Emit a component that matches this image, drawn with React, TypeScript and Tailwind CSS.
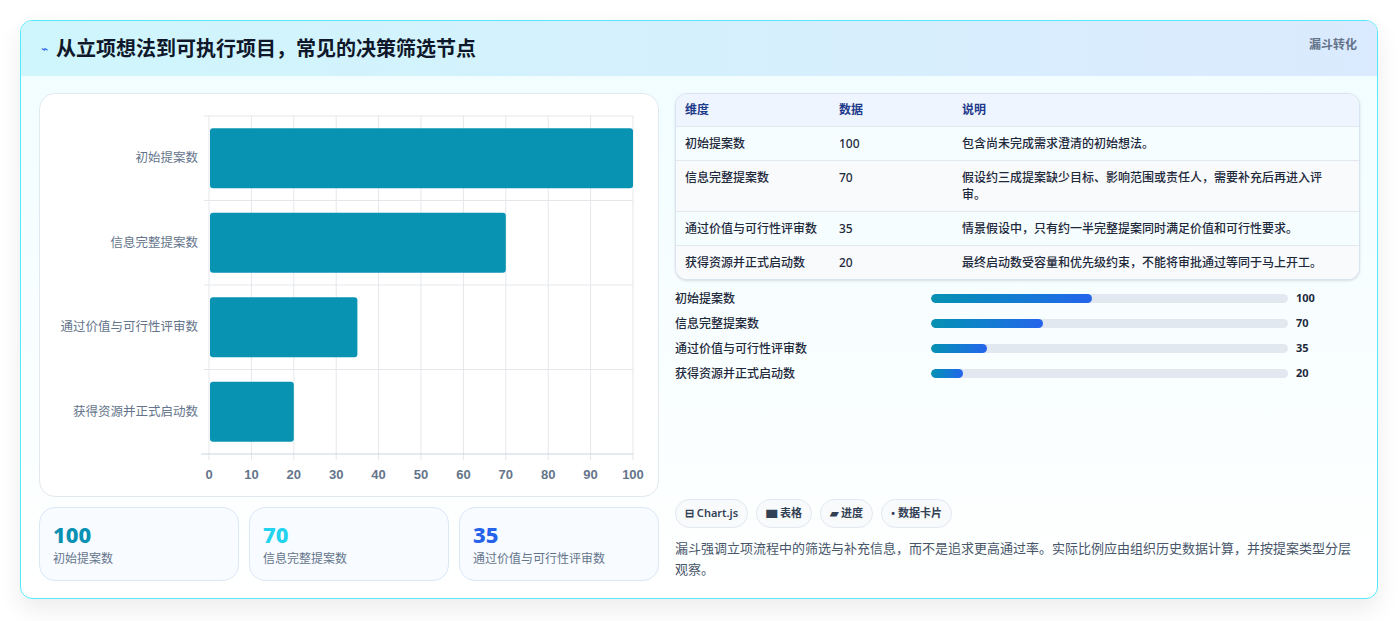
import React from "react";

const rows = [
  { n: "初始提案数", v: 100, d: "包含尚未完成需求澄清的初始想法。" },
  { n: "信息完整提案数", v: 70, d: "假设约三成提案缺少目标、影响范围或责任人，需要补充后再进入评审。" },
  { n: "通过价值与可行性评审数", v: 35, d: "情景假设中，只有约一半完整提案同时满足价值和可行性要求。" },
  { n: "获得资源并正式启动数", v: 20, d: "最终启动数受容量和优先级约束，不能将审批通过等同于马上开工。" },
];

function Chart() {
  const L = 169, R = 593, T = 22, B = 360;
  const W = R - L;
  const rowH = (B - T) / 4;
  return (
    <svg width="619" height="403" className="block">
      {Array.from({ length: 11 }).map((_, i) => (
        <line key={i} x1={L + (W * i) / 10} x2={L + (W * i) / 10} y1={T} y2={B + 6} stroke="#e5e7eb" />
      ))}
      {[0, 1, 2, 3].map((i) => (
        <line key={i} x1={L - 5} x2={R} y1={T + rowH * i} y2={T + rowH * i} stroke="#e5e7eb" />
      ))}
      <line x1={L - 8} x2={R} y1={B} y2={B} stroke="#cbd5e1" />
      {rows.map((r, i) => {
        const cy = T + rowH * i + rowH / 2;
        return (
          <g key={i}>
            <text x={158} y={cy + 4} textAnchor="end" fontSize="12.5" fill="#64748b" fontFamily="'Noto Sans CJK SC', sans-serif">{r.n}</text>
            <rect x={L + 1} y={cy - 30} width={(W * r.v) / 100 - 1} height={60} rx={3} fill="#0893b3" />
          </g>
        );
      })}
      {Array.from({ length: 11 }).map((_, i) => (
        <text key={i} x={L + (W * i) / 10} y={385} textAnchor="middle" fontSize="13" fill="#64748b" fontWeight="bold" fontFamily="'Liberation Sans', sans-serif">{i * 10}</text>
      ))}
    </svg>
  );
}

export default function App() {
  return (
    <div className="w-[1399px] h-[621px] bg-white p-5" style={{ fontFamily: "'Noto Sans', 'Noto Sans CJK SC', sans-serif" }}>
      <div className="w-[1358px] h-[579px] rounded-xl border border-cyan-300 bg-gradient-to-b from-[#f0fdff] to-white shadow-[0_10px_25px_rgba(0,0,0,0.08)] overflow-hidden flex flex-col">
        <div className="h-[55px] shrink-0 flex items-start justify-between pl-5 pr-5 bg-gradient-to-r from-[#cff6fc] to-[#dbeafe]">
          <div className="flex items-center gap-[8px] h-[55px]">
            <span className="text-[#2563eb] text-[12px]">⌁</span>
            <h1 className="text-[20px] font-bold text-[#0f172a]">从立项想法到可执行项目，常见的决策筛选节点</h1>
          </div>
          <span className="mt-[15px] text-[12px] font-bold text-[#64748b]">漏斗转化</span>
        </div>
        <div className="flex gap-4 pl-[18px] pr-[17px] pt-[17px]">
          <div className="w-[620px] flex flex-col gap-[10px]">
            <div className="h-[404px] rounded-2xl border border-[#e2e8f0] bg-white">
              <Chart />
            </div>
            <div className="grid grid-cols-3 gap-[10px]">
              {[
                { v: "100", l: "初始提案数", c: "text-[#0891b2]" },
                { v: "70", l: "信息完整提案数", c: "text-[#22d3ee]" },
                { v: "35", l: "通过价值与可行性评审数", c: "text-[#2563eb]" },
              ].map((s) => (
                <div key={s.l} className="h-[74px] rounded-2xl border border-[#dbe7f5] bg-[#f8fbff] px-[13px] pt-[12px]">
                  <div className={`text-[22px] font-extrabold leading-[28px] ${s.c}`}>{s.v}</div>
                  <div className="text-[12px] text-[#64748b] mt-[2px]">{s.l}</div>
                </div>
              ))}
            </div>
          </div>
          <div className="flex-1 flex flex-col">
            <div className="rounded-xl border border-[#d7e3f0] overflow-hidden bg-white shadow-sm">
              <table className="w-full text-[12px] text-[#1e293b] font-medium">
                <thead>
                  <tr className="bg-[#eef5fe] text-[#1e3a8a] text-left h-[32px]">
                    <th className="font-semibold pl-[9px] w-[163px]">维度</th>
                    <th className="font-semibold w-[123px]">数据</th>
                    <th className="font-semibold">说明</th>
                  </tr>
                </thead>
                <tbody>
                  {rows.map((r, i) => (
                    <tr key={i} className={`border-t border-[#e2e8f0] align-top leading-[17px] ${i % 2 ? "bg-[#f8fafc]" : "bg-[#f5fdff]"}`}>
                      <td className="pl-[9px] py-[8px]">{r.n}</td>
                      <td className="py-[8px]">{r.v}</td>
                      <td className="py-[8px] pr-5">{r.d}</td>
                    </tr>
                  ))}
                </tbody>
              </table>
            </div>
            <div className="mt-[10px] flex flex-col gap-[7px]">
              {rows.map((r) => (
                <div key={r.n} className="flex items-center h-[18px] text-[12px] font-medium text-[#1e293b]">
                  <span className="w-[256px]">{r.n}</span>
                  <div className="w-[357px] h-[9px] rounded-full bg-[#e2e8f0] overflow-hidden">
                    <div className="h-full rounded-full bg-gradient-to-r from-[#0891b2] to-[#2563eb]" style={{ width: `${r.v * 0.45}%` }} />
                  </div>
                  <span className="ml-2 text-[11px] font-bold">{r.v}</span>
                </div>
              ))}
            </div>
            <div className="mt-[116px] flex gap-2">
              {["⊟ Chart.js", "▆ 表格", "▰ 进度", "• 数据卡片"].map((t) => (
                <span key={t} className="h-[29px] px-[9px] flex items-center rounded-full border border-[#e2e8f0] bg-[#f8fafc] text-[11px] font-semibold text-[#334155]">{t}</span>
              ))}
            </div>
            <p className="mt-[10px] text-[13px] leading-[21px] text-[#475569]">漏斗强调立项流程中的筛选与补充信息，而不是追求更高通过率。实际比例应由组织历史数据计算，并按提案类型分层观察。</p>
          </div>
        </div>
      </div>
    </div>
  );
}
